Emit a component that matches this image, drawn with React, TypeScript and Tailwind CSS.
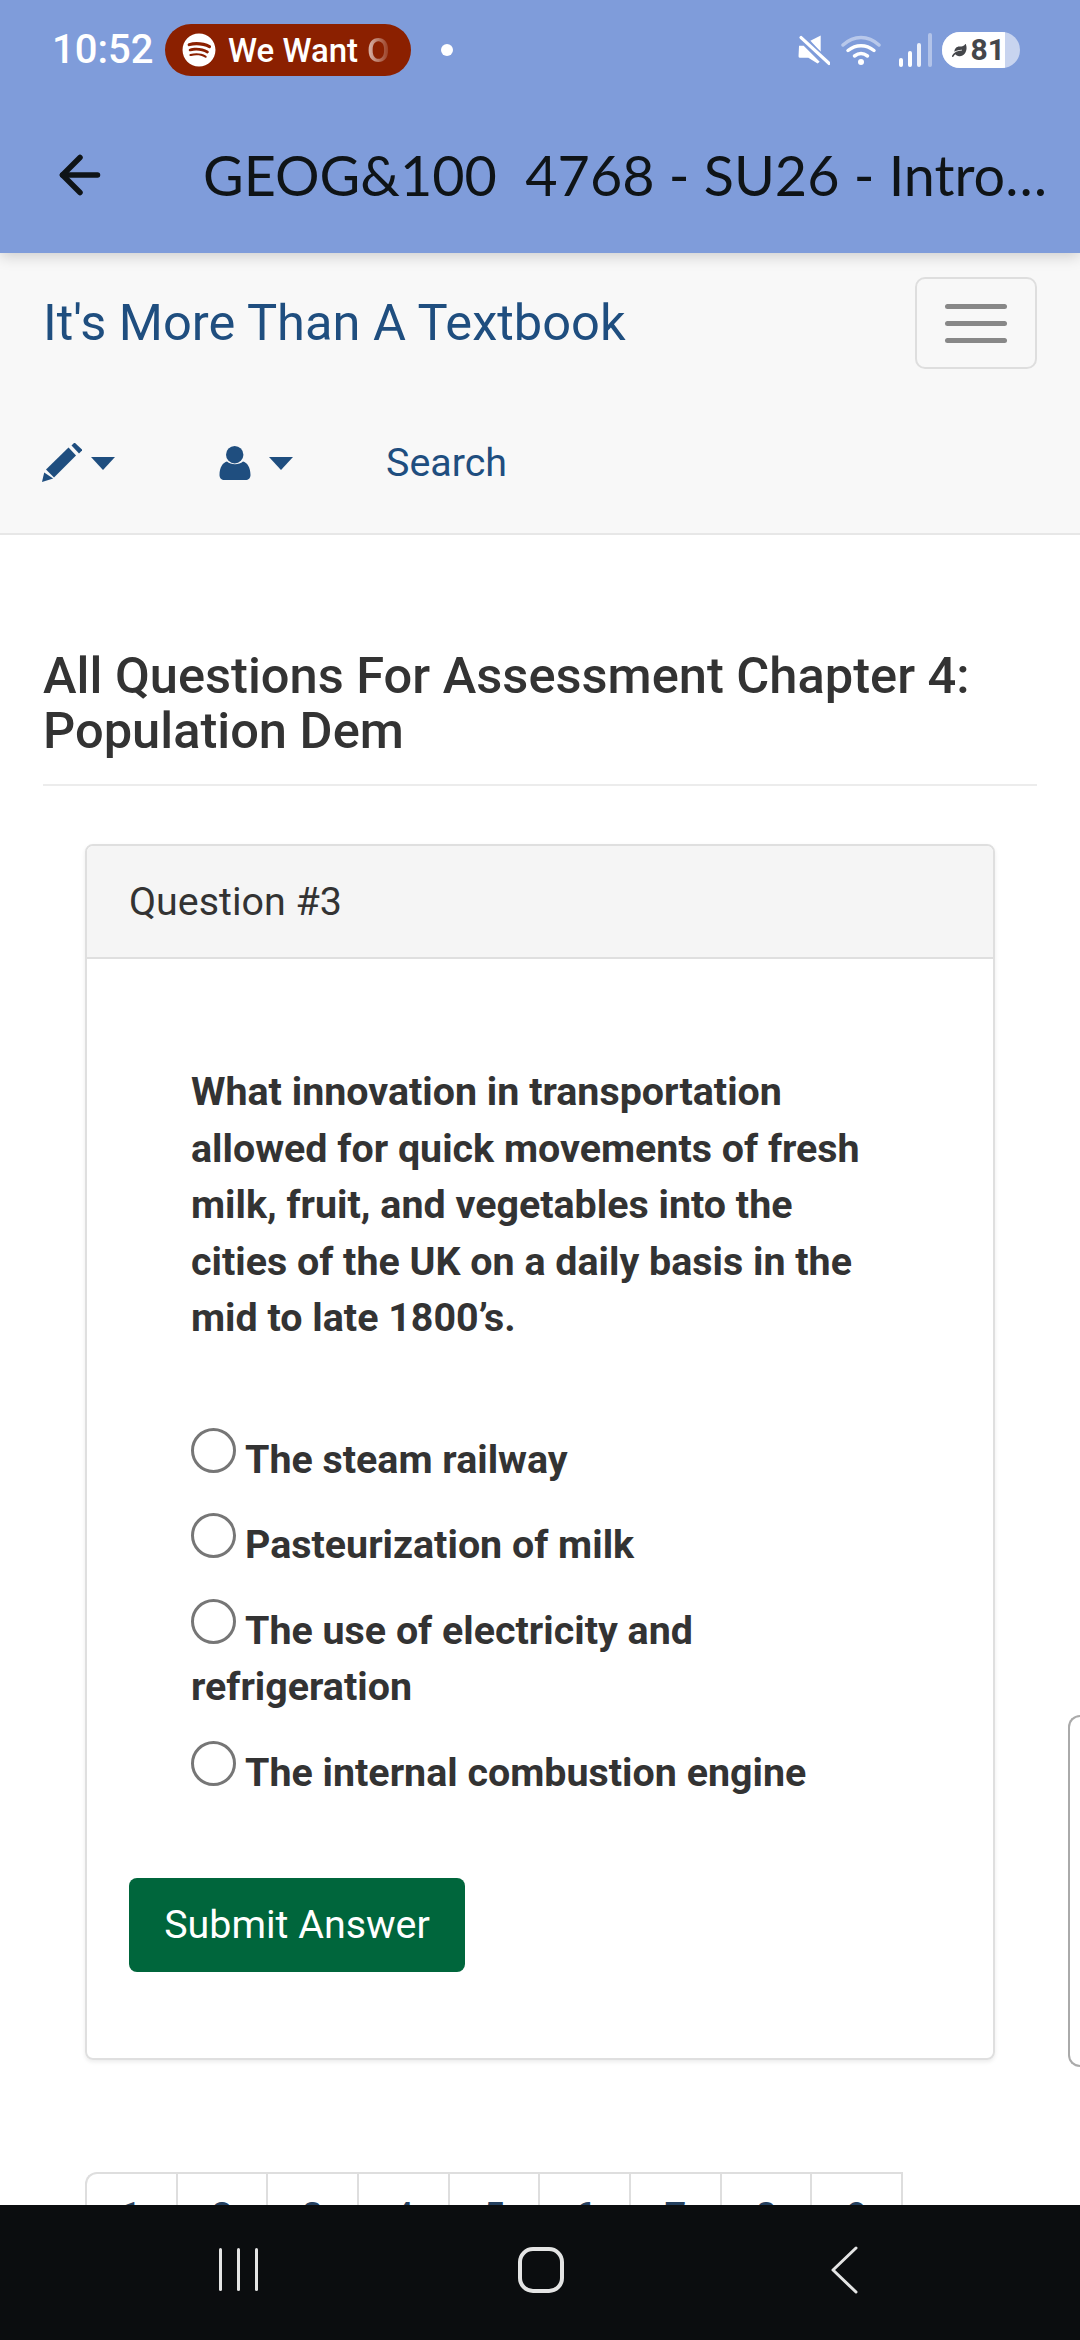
import React from 'react';
import { ArrowLeft } from 'lucide-react';
import { FaSpotify, FaLeaf } from 'react-icons/fa';

const options = [
  'The steam railway',
  'Pasteurization of milk',
  'The use of electricity and refrigeration',
  'The internal combustion engine',
];

function Caret() {
  return <span className="inline-block w-0 h-0 border-x-[12px] border-t-[13px] border-x-transparent border-t-[#1f4e7f]" />;
}

function StatusBar() {
  return (
    <div className="h-[100px] flex items-center pl-[52px] pr-[60px] text-white">
      <span className="font-['Roboto',sans-serif] font-medium text-[40px] leading-none w-[113px]">10:52</span>
      <div className="h-[52px] w-[246px] rounded-full bg-[#8b2000] flex items-center pl-[17px] overflow-hidden">
        <FaSpotify className="w-[34px] h-[34px]" />
        <span className="ml-[12px] font-['Roboto',sans-serif] font-medium text-[33px] leading-none whitespace-nowrap">We Want</span>
        <span className="ml-[9px] font-['Roboto',sans-serif] font-medium text-[33px] leading-none bg-gradient-to-r from-white/70 to-white/10 bg-clip-text text-transparent">O</span>
      </div>
      <span className="ml-[30px] w-[12px] h-[12px] rounded-full bg-white" />
      <div className="ml-auto flex items-center">
        <svg viewBox="8 10 31 29" className="w-[32px] h-[31px]" fill="white">
          <path d="M9 20h4.500L29 35.500 27 37l-9-5.500H10q-1.500 0-1.500-1.500z" />
          <path d="M20 15l10-5v16z" />
          <path d="M11 12l27 25" stroke="#7f9cda" strokeWidth="6" />
          <path d="M11 12l27 25" stroke="white" strokeWidth="3.200" strokeLinecap="round" />
        </svg>
        <svg viewBox="0 0 40 30" className="ml-[11px] w-[40px] h-[30px]" fill="none" strokeLinecap="round">
          <path d="M2 10c11-10 25-10 36 0" stroke="white" strokeOpacity="0.45" strokeWidth="3.500" />
          <path d="M7 15.500c8-6.500 18-6.500 26 0" stroke="white" strokeWidth="3.500" />
          <path d="M13.500 21c4-3 9-3 13 0" stroke="white" strokeWidth="3.500" />
          <circle cx="20" cy="27" r="3" fill="white" />
        </svg>
        <svg viewBox="0 0 33 34" className="ml-[18px] w-[33px] h-[34px]" fill="white">
          <rect x="0" y="25" width="4" height="9" rx="2" />
          <rect x="9" y="18" width="4" height="16" rx="2" />
          <rect x="18" y="10" width="4" height="24" rx="2" fillOpacity="0.85" />
          <rect x="29" y="0" width="4" height="34" rx="2" fillOpacity="0.4" />
        </svg>
        <div className="ml-[10px] w-[78px] h-[36px] rounded-full overflow-hidden bg-[#c8d4ef] flex">
          <div className="w-[63px] bg-white flex items-center pl-[10px] text-[#44464a]">
            <FaLeaf className="w-[19px] h-[19px]" />
            <span className="ml-[4px] font-['Roboto',sans-serif] font-bold text-[30px] leading-none">81</span>
          </div>
        </div>
      </div>
    </div>
  );
}

function NavBar() {
  return (
    <nav className="relative h-[282px] bg-[#f8f8f8] border-b-2 border-[#e7e7e7] px-[43px] pt-[24px] font-['Roboto',sans-serif] text-[#1f4e7f]">
      <div className="flex items-center justify-between">
        <span className="text-[50.6px] leading-[86px]">It's More Than A Textbook</span>
        <div className="w-[122px] h-[92px] rounded-[10px] border-2 border-[#dedede] flex flex-col items-center justify-center gap-[12px]">
          <span className="w-[62px] h-[5px] rounded-full bg-[#888888]" />
          <span className="w-[62px] h-[5px] rounded-full bg-[#888888]" />
          <span className="w-[62px] h-[5px] rounded-full bg-[#888888]" />
        </div>
      </div>
      <div className="mt-[66px] flex items-center">
        <svg viewBox="6 6 40 40" className="w-[40px] h-[40px] -ml-px" fill="currentColor">
          <path d="M6 45l2.200-9.500 9 6z" />
          <path d="M10 32.500L32.500 10.500l7.500 8-22 22z" />
          <path d="M35.500 8.500L38.500 5.500 46.500 13 43 16.500z" />
        </svg>
        <span className="ml-[9px] flex"><Caret /></span>
        <svg viewBox="7 8 32 34" className="ml-[104px] w-[32px] h-[34px]" fill="currentColor">
          <circle cx="22.700" cy="16.700" r="8.700" />
          <path d="M7.500 37c0-8 3.500-12.500 7.500-13.500 4 3.500 12 3.500 16 0 4 1 7.500 5.500 7.500 13.500 0 3-2 5-5 5h-21c-3 0-5-2-5-5z" />
        </svg>
        <span className="ml-[18px] flex"><Caret /></span>
        <span className="ml-[93px] text-[39.4px] leading-[56px]">Search</span>
      </div>
    </nav>
  );
}

function QuestionCard() {
  return (
    <section className="mx-[85px] mt-[58px] rounded-[8px] border-2 border-[#dfdfdf] shadow-[0_2px_4px_rgba(0,0,0,0.08)] overflow-hidden">
      <div className="h-[113px] bg-[#f5f5f5] border-b-2 border-[#dfdfdf] flex items-center px-[42px] text-[39.4px] text-[#333333]">
        Question #3
      </div>
      <div className="px-[42px] pt-[105px] pb-[86px]">
        <div className="px-[62px] font-bold text-[39.4px] leading-[56.5px] text-[#333333]">
          <p>What innovation in transportation allowed for quick movements of fresh milk, fruit, and vegetables into the cities of the UK on a daily basis in the mid to late 1800’s.</p>
          <div className="mt-[81px] flex flex-col gap-[25px]">
            {options.map((label) => (
              <label key={label} className="block">
                <input type="radio" name="answer" className="appearance-none inline-block w-[45px] h-[45px] rounded-full border-[3px] border-[#767676] bg-white mr-[9px] align-baseline" />
                {label}
              </label>
            ))}
          </div>
        </div>
        <button className="mt-[77px] h-[94px] w-[336px] rounded-[8px] bg-[#00663c] text-white text-[39.4px]">Submit Answer</button>
      </div>
    </section>
  );
}

function Pagination() {
  return (
    <div className="mt-[112px] ml-[85px] w-[818px] flex rounded-tl-[12px] border-t-2 border-l-2 border-[#dedede] text-[#24405f] text-[39.4px] leading-[56px]">
      {[1, 2, 3, 4, 5, 6, 7, 8, 9].map((n) => (
        <div key={n} className="flex-1 h-[120px] border-r-2 border-[#dedede] text-center pt-[15px]">{n}</div>
      ))}
    </div>
  );
}

export default function App() {
  return (
    <div className="w-[1080px] h-[2340px] flex flex-col overflow-hidden bg-white font-['Roboto',sans-serif]">
      <header className="relative z-10 h-[253px] bg-[#7f9cda] shadow-[0_3px_14px_rgba(0,0,0,0.18)]">
        <StatusBar />
        <div className="h-[153px] flex items-center pb-[4px] pl-[50px] pr-[26px]">
          <ArrowLeft className="w-[60px] h-[60px] text-[#0f1417] shrink-0" strokeWidth={2.2} />
          <h1 className="ml-[93px] truncate font-['Lato',sans-serif] text-[55.7px] leading-[70px] text-[#0f1417] whitespace-pre">GEOG&100  4768 - SU26 - Introduction to Human Geography</h1>
        </div>
      </header>
      <NavBar />
      <main className="relative flex-1 overflow-hidden">
        <h2 className="mx-[43px] mt-[113px] text-[50.6px] leading-[55px] font-medium text-[#333333]">All Questions For Assessment Chapter 4: Population Dem</h2>
        <hr className="mx-[43px] mt-[26px] border-t-2 border-[#ececec]" />
        <QuestionCard />
        <Pagination />
        <div className="absolute top-[1180px] right-0 w-[12px] h-[352px] rounded-l-[12px] border-2 border-r-0 border-[#aaaaaa] bg-white" />
      </main>
      <footer className="h-[135px] shrink-0 bg-[#0b0d0f] flex items-center pb-[6px] text-[#e4e4e4]">
        <div className="w-[300px] flex justify-end pr-[42px] gap-[15px]">
          <span className="w-[3px] h-[43px] bg-[#e4e4e4] rounded-full" />
          <span className="w-[3px] h-[43px] bg-[#e4e4e4] rounded-full" />
          <span className="w-[3px] h-[43px] bg-[#e4e4e4] rounded-full" />
        </div>
        <div className="ml-[218px] w-[46px] h-[46px] rounded-[15px] border-[4px] border-[#e4e4e4]" />
        <svg viewBox="0 0 28 48" className="ml-[266px] w-[28px] h-[48px]" fill="none" stroke="#e4e4e4" strokeWidth="3" strokeLinecap="round" strokeLinejoin="round">
          <path d="M26 2L3 24l23 22" />
        </svg>
      </footer>
    </div>
  );
}
